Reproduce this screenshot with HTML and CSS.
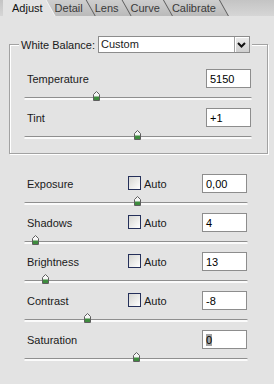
FILE: index.html
```html
<!DOCTYPE html>
<html lang="en">

<head>
    <meta charset="UTF-8">
    <meta name="viewport" content="width=device-width, initial-scale=1.0">
    <title>Camera Raw - Adjust</title>
    <link rel="stylesheet" href="styles.css">
</head>

<body>
    <div class="tabs">
        <span class="tab active">Adjust</span>
        <span class="tab">Detail</span>
        <span class="tab">Lens</span>
        <span class="tab">Curve</span>
        <span class="tab">Calibrate</span>
    </div>

    <div class="panel">
        <fieldset class="wb-group">
            <legend class="wb">
                <span class="wb-label">White Balance:</span>
                <span class="select">
                    <span class="select-value">Custom</span>
                    <span class="select-btn">
                        <svg width="9" height="6" viewBox="0 0 9 6"><path d="M1 1L4.5 4.5L8 1" fill="none" stroke="#111" stroke-width="2"/></svg>
                    </span>
                </span>
            </legend>

            <div class="row">
                <div class="row-head">
                    <span class="row-label">Temperature</span>
                    <span class="value">5150</span>
                </div>
                <div class="track"><svg class="thumb" style="left: 69px" width="7" height="10" viewBox="0 0 7 10"><path d="M0.5 9.5V3.5L3.5 0.5L6.5 3.5V9.5Z" fill="#f6f6f6" stroke="#5e5e5e"/><path d="M1 5.5h5v3.5H1z" fill="#3e8c3e"/></svg></div>
            </div>
            <div class="row">
                <div class="row-head">
                    <span class="row-label">Tint</span>
                    <span class="value">+1</span>
                </div>
                <div class="track"><svg class="thumb" style="left: 110px" width="7" height="10" viewBox="0 0 7 10"><path d="M0.5 9.5V3.5L3.5 0.5L6.5 3.5V9.5Z" fill="#f6f6f6" stroke="#5e5e5e"/><path d="M1 5.5h5v3.5H1z" fill="#3e8c3e"/></svg></div>
            </div>
        </fieldset>

        <div class="adjust-list">
            <div class="row">
                <div class="row-head">
                    <span class="row-label">Exposure</span>
                    <span class="auto"><span class="check"></span>Auto</span>
                    <span class="value">0,00</span>
                </div>
                <div class="track"><svg class="thumb" style="left: 110px" width="7" height="10" viewBox="0 0 7 10"><path d="M0.5 9.5V3.5L3.5 0.5L6.5 3.5V9.5Z" fill="#f6f6f6" stroke="#5e5e5e"/><path d="M1 5.5h5v3.5H1z" fill="#3e8c3e"/></svg></div>
            </div>
            <div class="row">
                <div class="row-head">
                    <span class="row-label">Shadows</span>
                    <span class="auto"><span class="check"></span>Auto</span>
                    <span class="value">4</span>
                </div>
                <div class="track"><svg class="thumb" style="left: 8px" width="7" height="10" viewBox="0 0 7 10"><path d="M0.5 9.5V3.5L3.5 0.5L6.5 3.5V9.5Z" fill="#f6f6f6" stroke="#5e5e5e"/><path d="M1 5.5h5v3.5H1z" fill="#3e8c3e"/></svg></div>
            </div>
            <div class="row">
                <div class="row-head">
                    <span class="row-label">Brightness</span>
                    <span class="auto"><span class="check"></span>Auto</span>
                    <span class="value">13</span>
                </div>
                <div class="track"><svg class="thumb" style="left: 18px" width="7" height="10" viewBox="0 0 7 10"><path d="M0.5 9.5V3.5L3.5 0.5L6.5 3.5V9.5Z" fill="#f6f6f6" stroke="#5e5e5e"/><path d="M1 5.5h5v3.5H1z" fill="#3e8c3e"/></svg></div>
            </div>
            <div class="row">
                <div class="row-head">
                    <span class="row-label">Contrast</span>
                    <span class="auto"><span class="check"></span>Auto</span>
                    <span class="value">-8</span>
                </div>
                <div class="track"><svg class="thumb" style="left: 60px" width="7" height="10" viewBox="0 0 7 10"><path d="M0.5 9.5V3.5L3.5 0.5L6.5 3.5V9.5Z" fill="#f6f6f6" stroke="#5e5e5e"/><path d="M1 5.5h5v3.5H1z" fill="#3e8c3e"/></svg></div>
            </div>
            <div class="row">
                <div class="row-head">
                    <span class="row-label">Saturation</span>
                    <span class="value"><span class="selected">0</span></span>
                </div>
                <div class="track"><svg class="thumb" style="left: 109px" width="7" height="10" viewBox="0 0 7 10"><path d="M0.5 9.5V3.5L3.5 0.5L6.5 3.5V9.5Z" fill="#f6f6f6" stroke="#5e5e5e"/><path d="M1 5.5h5v3.5H1z" fill="#3e8c3e"/></svg></div>
            </div>
        </div>
    </div>
</body>

</html>
```

FILE: styles.css
```css
/* General styling */
body {
    margin: 0;
    padding: 0;
    font-family: "Liberation Sans", Arial, sans-serif;
    font-size: 11px;
    color: #1a1a1a;
    background: #e3e3e3;
}

/* Tab strip */
.tabs {
    display: flex;
    height: 16px;
    padding-left: 3px;
    background: linear-gradient(#c4c4c4, #d6d6d6);
}

.tab {
    position: relative;
    height: 16px;
    line-height: 16px;
    padding: 0 13px 0 9px;
    margin-left: -10px;
    color: #3a3a3a;
    background: #5c5c5c;
    clip-path: polygon(0 0, calc(100% - 9px) 0, 100% 100%, 0 100%);
}

.tab::before {
    content: "";
    position: absolute;
    top: 0;
    left: 0;
    right: 1px;
    bottom: 0;
    z-index: -1;
    background: linear-gradient(#cecece, #bababa);
    clip-path: polygon(0 0, calc(100% - 9px) 0, 100% 100%, 0 100%);
}

.tab:nth-child(1) { z-index: 5; margin-left: 0; }
.tab:nth-child(2) { z-index: 4; }
.tab:nth-child(3) { z-index: 3; }
.tab:nth-child(4) { z-index: 2; }
.tab:nth-child(5) { z-index: 1; }

.tab.active {
    z-index: 6;
    color: #111;
    background: #f2f2f2;
}

.tab.active::before {
    background: #e3e3e3;
}

/* Panel */
.panel {
    padding-bottom: 20px;
}

.wb-group {
    margin: 20px 10px 0 9px;
    padding: 16px 15px 6px 14px;
    border: 1px solid #a2a2a2;
    box-shadow: 1px 1px 0 #fff, inset 1px 1px 0 #fff;
}

.wb {
    display: flex;
    align-items: center;
    gap: 3px;
    margin-left: -5px;
    padding: 0 2px;
    white-space: nowrap;
    background: #e3e3e3;
}

.select {
    display: flex;
    width: 150px;
    height: 15px;
    border: 1px solid #8c8c8c;
    background: #fff;
}

.select-value {
    flex: 1;
    padding-left: 2px;
    line-height: 15px;
}

.select-btn {
    display: flex;
    align-items: center;
    justify-content: center;
    width: 14px;
    border-left: 1px solid #a0a0a0;
    background: linear-gradient(#ececec, #cfcfcf);
    box-shadow: inset 1px 1px 0 #fff;
}

.adjust-list {
    margin-top: 20px;
    padding: 0 26px 0 24px;
}

/* Slider rows */
.row {
    height: 39px;
}

.row-head {
    display: flex;
    align-items: center;
    height: 19px;
}

.row-label {
    width: 101px;
    padding-left: 3px;
    padding-top: 1px;
}

.auto {
    display: flex;
    align-items: flex-start;
    height: 19px;
    padding-top: 1px;
    line-height: 18px;
    box-sizing: border-box;
}

.check {
    width: 11px;
    height: 12px;
    margin: 1px 3px 0 0;
    border: 1px solid #25305a;
    background: linear-gradient(135deg, #d6d6d2, #fff);
}

.value {
    width: 40px;
    height: 17px;
    line-height: 18px;
    margin: 0 1px 0 auto;
    padding-left: 3px;
    border: 1px solid #8d8d8d;
    background: #fff;
    color: #000;
}

.selected {
    background: #a3a3a3;
}

.track {
    position: relative;
    height: 2px;
    margin-top: 9px;
    border-top: 1px solid #8f8f8f;
    border-radius: 2px;
    background: #fbfbfb;
}

.thumb {
    position: absolute;
    top: -7px;
}
```
